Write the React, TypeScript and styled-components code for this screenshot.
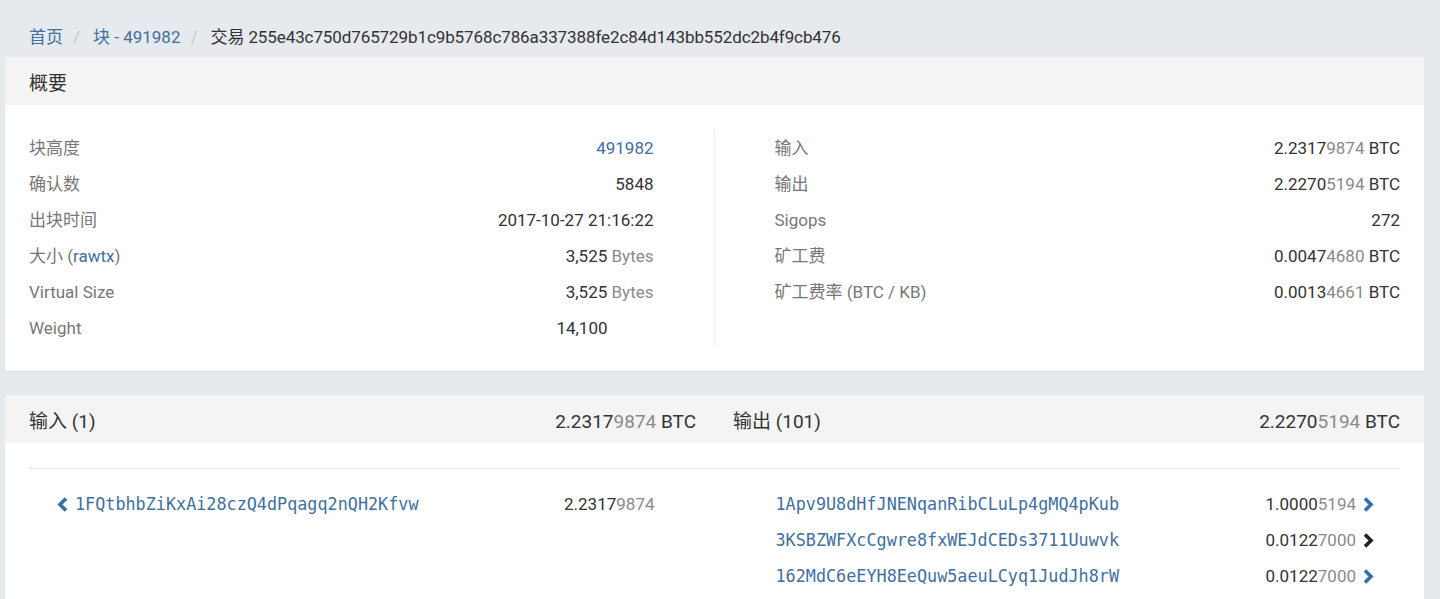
import styled, { createGlobalStyle } from "styled-components";

const GlobalStyle = createGlobalStyle`
    html, body {
        margin: 0;
        padding: 0;
        background: #e6e9ed;
    }
    body {
        font-family: Roboto, "Noto Sans CJK SC", sans-serif;
        color: #333;
    }
`;

const LINK = '#41709f';

const Page = styled.div`
    min-height: 100vh;
    padding: 0 16px 0 5px;
    box-sizing: border-box;
`;

const Breadcrumb = styled.div`
    display: flex;
    align-items: baseline;
    padding: 26px 24px 9px;
    font-size: 17px;
    line-height: 22px;

    a {
        color: ${LINK};
        text-decoration: none;
    }
`;

const Sep = styled.span`
    color: #c4c8cc;
    margin: 0 13px 0 10px;
`;

const TxId = styled.span`
    letter-spacing: -0.1px;
`;

const Card = styled.div`
    background: #fff;
    border-radius: 3px;
    overflow: hidden;
    box-shadow: 0 1px 1px rgba(0, 0, 0, 0.04);
    & + & {
        margin-top: 24px;
    }
`;

const CardHeader = styled.div`
    height: 48px;
    background: #f4f4f5;
    padding: 0 24px;
    display: flex;
    align-items: center;
    font-size: 19px;
    color: #333;
`;

const HeaderGrid = styled.div`
    flex: 1;
    display: grid;
    grid-template-columns: 1fr 1fr;
    column-gap: 37px;
`;

const HeaderCell = styled.div`
    display: flex;
    justify-content: space-between;
    align-items: baseline;
`;

const SummaryBody = styled.div`
    padding: 25px 24px;
    display: grid;
    grid-template-columns: 1fr 1fr;
`;

const Column = styled.div<{ $side: 'left' | 'right' }>`
    ${p => p.$side === 'left'
        ? 'padding-right: 60px; border-right: 1px solid #ececec;'
        : 'padding-left: 60px;'}
`;

const Row = styled.div`
    display: flex;
    justify-content: space-between;
    align-items: baseline;
    height: 36px;
    line-height: 36px;
    font-size: 17px;
`;

const TxRow = styled(Row)`
    align-items: center;
`;

const Label = styled.span`
    color: #777;
    a {
        color: ${LINK};
        text-decoration: none;
    }
`;

const Value = styled.span<{ $shift?: number }>`
    color: #333;
    margin-right: ${p => p.$shift || 0}px;
    a {
        color: ${LINK};
        text-decoration: none;
    }
`;

const Faint = styled.span`
    color: #8a8a8a;
`;

const TxBody = styled.div`
    padding: 25px 24px 24px;
`;

const Rule = styled.div`
    border-top: 1px solid #e4e4e4;
    margin-bottom: 17px;
`;

const TxGrid = styled.div`
    display: grid;
    grid-template-columns: 1fr 1fr;
`;

const TxColumn = styled.div<{ $side: 'left' | 'right' }>`
    padding: ${p => p.$side === 'left' ? '0 60px 0 28px' : '0 26px 0 61px'};
`;

const Addr = styled.span`
    display: flex;
    align-items: center;
    gap: 7px;
    font-family: "DejaVu Sans Mono", "Liberation Mono", monospace;
    font-size: 16.8px;
    color: ${LINK};
`;

const Amount = styled.span`
    display: flex;
    align-items: center;
    gap: 7px;
    color: #333;
`;

const Chevron = ({ dir, color }: { dir: 'left' | 'right'; color: string }) => (
    <svg width="11" height="15" viewBox="0 0 11 15">
        <polyline
            points={dir === 'left' ? '9,1.5 3,7.5 9,13.5' : '2,1.5 8,7.5 2,13.5'}
            fill="none"
            stroke={color}
            strokeWidth="3.6"
        />
    </svg>
);

// first 4 decimals dark, last 4 faint
const Btc = ({ v, unit }: { v: string; unit?: boolean }) => (
    <span>
        {v.slice(0, 6)}<Faint>{v.slice(6)}</Faint>{unit ? ' BTC' : ''}
    </span>
);

const outputs = [
    { addr: '1Apv9U8dHfJNENqanRibCLuLp4gMQ4pKub', v: '1.00005194', spent: true },
    { addr: '3KSBZWFXcCgwre8fxWEJdCEDs3711Uuwvk', v: '0.01227000', spent: false },
    { addr: '162MdC6eEYH8EeQuw5aeuLCyq1JudJh8rW', v: '0.01227000', spent: true },
];

const App = () => (
    <Page>
        <GlobalStyle />
        <Breadcrumb>
            <a href="#">首页</a>
            <Sep>/</Sep>
            <a href="#">块 - 491982</a>
            <Sep>/</Sep>
            <TxId>交易 255e43c750d765729b1c9b5768c786a337388fe2c84d143bb552dc2b4f9cb476</TxId>
        </Breadcrumb>

        <Card>
            <CardHeader>概要</CardHeader>
            <SummaryBody>
                <Column $side="left">
                    <Row><Label>块高度</Label><Value><a href="#">491982</a></Value></Row>
                    <Row><Label>确认数</Label><Value>5848</Value></Row>
                    <Row><Label>出块时间</Label><Value>2017-10-27 21:16:22</Value></Row>
                    <Row><Label>大小 (<a href="#">rawtx</a>)</Label><Value>3,525 <Faint>Bytes</Faint></Value></Row>
                    <Row><Label>Virtual Size</Label><Value>3,525 <Faint>Bytes</Faint></Value></Row>
                    <Row><Label>Weight</Label><Value $shift={46}>14,100</Value></Row>
                </Column>
                <Column $side="right">
                    <Row><Label>输入</Label><Value><Btc v="2.23179874" unit /></Value></Row>
                    <Row><Label>输出</Label><Value><Btc v="2.22705194" unit /></Value></Row>
                    <Row><Label>Sigops</Label><Value>272</Value></Row>
                    <Row><Label>矿工费</Label><Value><Btc v="0.00474680" unit /></Value></Row>
                    <Row><Label>矿工费率 (BTC / KB)</Label><Value><Btc v="0.00134661" unit /></Value></Row>
                </Column>
            </SummaryBody>
        </Card>

        <Card>
            <CardHeader>
                <HeaderGrid>
                    <HeaderCell><span>输入 (1)</span><Btc v="2.23179874" unit /></HeaderCell>
                    <HeaderCell><span>输出 (101)</span><Btc v="2.22705194" unit /></HeaderCell>
                </HeaderGrid>
            </CardHeader>
            <TxBody>
                <Rule />
                <TxGrid>
                    <TxColumn $side="left">
                        <TxRow>
                            <Addr>
                                <Chevron dir="left" color="#336fad" />
                                1FQtbhbZiKxAi28czQ4dPqagq2nQH2Kfvw
                            </Addr>
                            <Amount><Btc v="2.23179874" /></Amount>
                        </TxRow>
                    </TxColumn>
                    <TxColumn $side="right">
                        {outputs.map(o => (
                            <TxRow key={o.addr}>
                                <Addr>{o.addr}</Addr>
                                <Amount>
                                    <Btc v={o.v} />
                                    <Chevron dir="right" color={o.spent ? '#336fad' : '#222'} />
                                </Amount>
                            </TxRow>
                        ))}
                    </TxColumn>
                </TxGrid>
            </TxBody>
        </Card>
    </Page>
);

export default App;
